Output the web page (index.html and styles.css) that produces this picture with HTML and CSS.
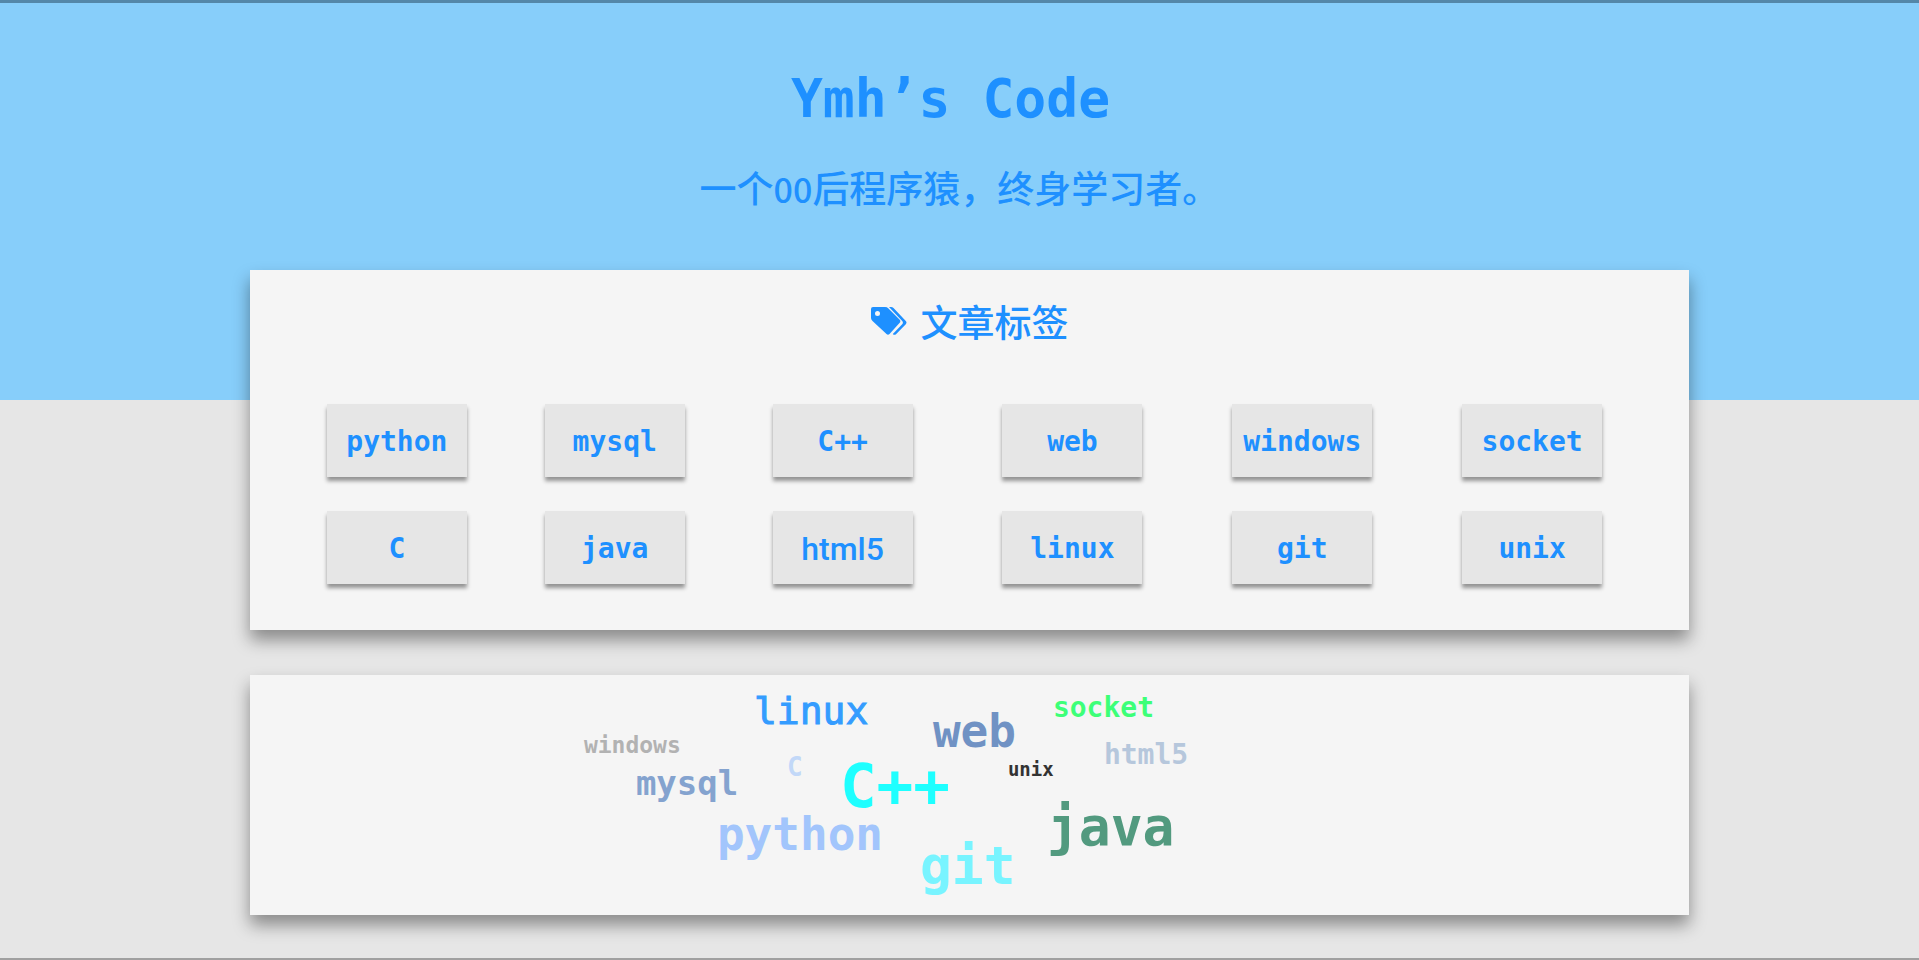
FILE: index.html
```html
<!DOCTYPE html>
<html lang="zh-CN">
<head>
<meta charset="utf-8">
<title>Ymh’s Code</title>
<link rel="stylesheet" href="styles.css">
</head>
<body>
<header class="hero">
  <h1 class="hero-title">Ymh’s Code</h1>
  <p class="hero-subtitle">一个<span class="digits">00</span>后程序猿，终身学习者。</p>
</header>
<main class="content">
  <section class="card tags">
    <h2 class="tags-title">
      <svg class="tags-icon" viewBox="0 0 36 28" aria-hidden="true">
        <path fill="currentColor" fill-rule="evenodd" d="M2 0H14Q16 0 17.500 1.400L28.500 12.500Q30.200 14.200 28.500 16L18.500 27Q17 28.500 15.500 27L1.500 14Q0 12.500 0 11V2Q0 0 2 0ZM6.500 4A2.500 2.500 0 1 0 6.500 9A2.500 2.500 0 1 0 6.500 4Z"/>
        <path fill="currentColor" d="M18 0H20Q21.500 0 22.500 1L34.800 14Q36.200 15.500 34.800 17.200L25 27.200Q23.200 28.600 21.800 27L31.200 17.200Q32.600 15.700 31.200 14Z"/>
      </svg>
      <span>文章标签</span>
    </h2>
    <nav class="tag-grid" aria-label="文章标签">
      <a class="tag" href="#python">python</a>
      <a class="tag" href="#mysql">mysql</a>
      <a class="tag" href="#cpp">C++</a>
      <a class="tag" href="#web">web</a>
      <a class="tag" href="#windows">windows</a>
      <a class="tag" href="#socket">socket</a>
      <a class="tag" href="#c">C</a>
      <a class="tag" href="#java">java</a>
      <a class="tag tag-sans" href="#html5">html5</a>
      <a class="tag" href="#linux">linux</a>
      <a class="tag" href="#git">git</a>
      <a class="tag" href="#unix">unix</a>
    </nav>
  </section>
  <section class="card cloud">
    <span class="word word-linux">linux</span>
    <span class="word word-web">web</span>
    <span class="word word-socket">socket</span>
    <span class="word word-windows">windows</span>
    <span class="word word-html5">html5</span>
    <span class="word word-mysql">mysql</span>
    <span class="word word-c">C</span>
    <span class="word word-cpp">C++</span>
    <span class="word word-unix">unix</span>
    <span class="word word-python">python</span>
    <span class="word word-java">java</span>
    <span class="word word-git">git</span>
  </section>
</main>
</body>
</html>
```
FILE: styles.css
```css
* { box-sizing: border-box; }

body {
  margin: 0;
  min-height: 100vh;
  background: #e6e6e6;
  border-bottom: 2px solid #a0a0a0;
  color: #1e90ff;
  font-family: "DejaVu Sans Mono", "Noto Sans CJK SC", monospace;
}

.hero {
  min-height: 400px;
  padding: 64px 16px 0;
  border-top: 3px solid #5487a8;
  background: #87cefa;
  text-align: center;
}

.hero-title {
  margin: 0;
  padding-right: 18px;
  font-size: 53px;
  line-height: 64px;
}

.hero-subtitle {
  margin: 32px 0 0;
  font-family: "Noto Sans CJK SC", sans-serif;
  font-size: 37px;
  font-weight: 500;
  line-height: 48px;
}

.digits { font-size: 34px; }

.content {
  display: flex;
  flex-direction: column;
  gap: 45px;
  width: 75%;
  margin: -130px 0 0 calc(12.5% + 10px);
  padding-bottom: 43px;
}

.card {
  background: #f5f5f5;
  box-shadow: 0 10px 16px rgba(0, 0, 0, .4);
}

.tags { padding: 27px 87px 46px 77px; }

.tags-title {
  display: flex;
  align-items: center;
  justify-content: center;
  gap: 14px;
  margin: 0 0 59px;
  padding-left: 10px;
  font-family: "Noto Sans CJK SC", sans-serif;
  font-size: 37px;
  font-weight: 500;
  line-height: 48px;
}

.tags-icon {
  width: 36px;
  height: 28px;
}

.tag-grid {
  display: grid;
  grid-template-columns: 218fr 228fr 230fr 230fr 230fr 140px;
  gap: 34px 0;
}

.tag {
  display: flex;
  align-items: center;
  justify-content: center;
  width: 140px;
  height: 73px;
  padding-top: 2px;
  background: #e6e6e6;
  box-shadow: 0 4px 4px rgba(0, 0, 0, .4);
  color: inherit;
  font-size: 28px;
  font-weight: 700;
  text-decoration: none;
}

.tag-sans {
  font-family: Roboto, sans-serif;
  font-size: 32px;
  font-weight: 500;
}

.cloud {
  position: relative;
  min-height: 240px;
}

.word {
  position: absolute;
  font-weight: 700;
  line-height: 1;
}

.word-linux {
  left: 504px;
  top: 17px;
  color: #349cff;
  font-size: 38px;
  font-weight: 400;
  -webkit-text-stroke: 1px currentColor;
}
.word-web { left: 683px; top: 33px; color: #7092c4; font-size: 46px; }
.word-socket { left: 803px; top: 19px; color: #3dff78; font-size: 28px; }
.word-windows { left: 334px; top: 59px; color: #b2b2b2; font-size: 23px; }
.word-html5 { left: 854px; top: 66px; color: #b6c7dc; font-size: 28px; }
.word-mysql { left: 386px; top: 91px; color: #84a3cf; font-size: 34px; }
.word-c { left: 537px; top: 79px; color: #c2d8f8; font-size: 26px; }
.word-cpp { left: 590px; top: 80px; color: #1effff; font-size: 61px; }
.word-unix { left: 758px; top: 85px; color: #333333; font-size: 19px; }
.word-python { left: 467px; top: 136px; color: #a2c5fc; font-size: 46px; }
.word-java { left: 797px; top: 125px; color: #529a7f; font-size: 53px; }
.word-git { left: 670px; top: 164px; color: #78f4ff; font-size: 53px; }
```
